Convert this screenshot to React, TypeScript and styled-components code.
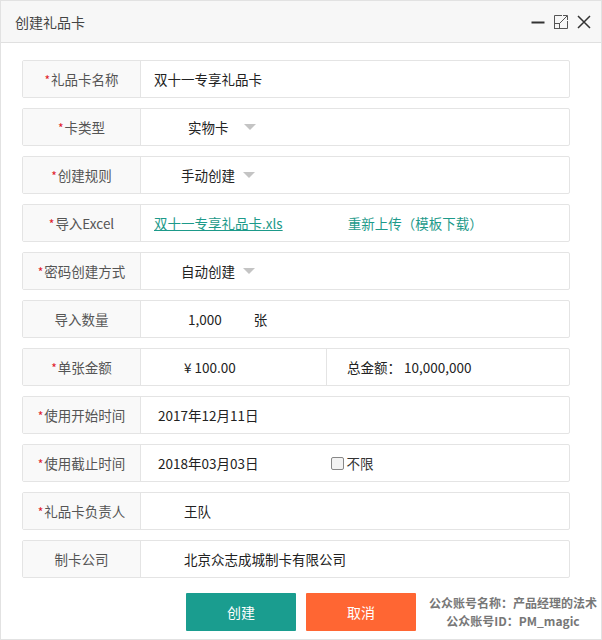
import React from "react"
import styled, { createGlobalStyle } from "styled-components"

const GlobalStyle = createGlobalStyle`
  html, body {
    margin: 0;
    padding: 0;
    background: #ffffff;
  }
  body {
    font-family: "Noto Sans CJK SC", "Noto Sans", "Liberation Sans", sans-serif;
    color: #333;
  }
`

const Dialog = styled.div`
  position: relative;
  width: 602px;
  height: 640px;
  box-sizing: border-box;
  border: 1px solid #e2e2e2;
  background: #fff;
  display: flex;
  flex-direction: column;
`

const Header = styled.div`
  height: 42px;
  box-sizing: border-box;
  display: flex;
  align-items: center;
  justify-content: space-between;
  padding: 0 9px 0 14px;
  background: #f7f7f7;
  border-bottom: 1px solid #e0e0e0;
`

const Title = styled.div`
  font-size: 14px;
  color: #444;
`

const Tools = styled.div`
  display: flex;
  align-items: center;
  gap: 7px;
`

const ToolIcon = styled.svg`
  width: 16px;
  height: 16px;
  display: block;
`

const Body = styled.div`
  display: flex;
  flex-direction: column;
  gap: 10px;
  padding: 17px 31px 0 21px;
`

const Row = styled.div`
  display: flex;
  height: 38px;
  box-sizing: border-box;
  border: 1px solid #e4e4e4;
  border-radius: 2px;
  font-size: 13.5px;
`

const Label = styled.div`
  width: 117px;
  flex-shrink: 0;
  display: flex;
  align-items: center;
  justify-content: center;
  background: #f9f9f9;
  border-right: 1px solid #e4e4e4;
  color: #555;
`

const Star = styled.span`
  color: #e0202a;
  font-size: 12px;
  margin-right: 1px;
`

const Value = styled.div<{ $indent: number; $width?: number; $divider?: boolean }>`
  display: flex;
  align-items: center;
  padding-left: ${(p) => p.$indent}px;
  color: #222;
  ${(p) => (p.$width ? `width: ${p.$width}px; flex-shrink: 0;` : "flex: 1;")}
  ${(p) => (p.$divider ? "border-right: 1px solid #e4e4e4;" : "")}
  box-sizing: border-box;
`

const Caret = styled.span<{ $gap: number }>`
  width: 0;
  height: 0;
  margin-left: ${(p) => p.$gap}px;
  border-left: 6px solid transparent;
  border-right: 6px solid transparent;
  border-top: 6px solid #c4c4c4;
`

const FileLink = styled.a<{ $underline?: boolean }>`
  color: #1d9a8a;
  text-decoration: ${(p) => (p.$underline ? "underline" : "none")};
  cursor: pointer;
`

const Unit = styled.span<{ $gap: number }>`
  margin-left: ${(p) => p.$gap}px;
`

const Check = styled.label`
  display: flex;
  align-items: center;
  margin-left: 73px;
  color: #333;
`

const Box = styled.span`
  width: 11px;
  height: 11px;
  border: 1px solid #888;
  border-radius: 2px;
  background: #f3f3f3;
  margin-right: 2px;
`

const Footer = styled.div`
  display: flex;
  justify-content: center;
  gap: 10px;
  padding-top: 15px;
  padding-left: 0px;
`

const Button = styled.button<{ $color: string }>`
  width: 110px;
  height: 38px;
  border: none;
  border-radius: 1px;
  background: ${(p) => p.$color};
  color: #fff;
  font-family: inherit;
  font-size: 14px;
  cursor: pointer;
`

const Watermark = styled.div`
  position: absolute;
  right: 4px;
  bottom: 9px;
  text-align: center;
  font-size: 12px;
  font-weight: bold;
  line-height: 18px;
  color: #777;
`

const Req: React.FC<{ children: React.ReactNode; required?: boolean }> = ({
  children,
  required = true,
}) => (
  <Label>
    {required && <Star>*</Star>}
    {children}
  </Label>
)

const App: React.FC = () => {
  return (
    <>
      <GlobalStyle />
      <Dialog>
        <Header>
          <Title>创建礼品卡</Title>
          <Tools>
            <ToolIcon viewBox="0 0 16 16">
              <path d="M1.5 8.5h13" stroke="#333" strokeWidth="2" />
            </ToolIcon>
            <ToolIcon viewBox="0 0 16 16">
              <path d="M9 1.5H1.5v13h13V7" fill="none" stroke="#555" strokeWidth="1" />
              <rect x="1.5" y="9.5" width="5" height="5" fill="none" stroke="#555" strokeWidth="1" />
              <path d="M7 9L14 2M10 1.5h4.5V6" fill="none" stroke="#555" strokeWidth="1" />
            </ToolIcon>
            <ToolIcon viewBox="0 0 16 16">
              <path d="M2 2l12 12M14 2L2 14" stroke="#333" strokeWidth="1.5" />
            </ToolIcon>
          </Tools>
        </Header>

        <Body>
          <Row>
            <Req>礼品卡名称</Req>
            <Value $indent={13}>双十一专享礼品卡</Value>
          </Row>
          <Row>
            <Req>卡类型</Req>
            <Value $indent={47}>
              实物卡
              <Caret $gap={15} />
            </Value>
          </Row>
          <Row>
            <Req>创建规则</Req>
            <Value $indent={40}>
              手动创建
              <Caret $gap={8} />
            </Value>
          </Row>
          <Row>
            <Req>导入Excel</Req>
            <Value $indent={13}>
              <FileLink $underline>双十一专享礼品卡.xls</FileLink>
              <Unit $gap={65}>
                <FileLink>重新上传（模板下载）</FileLink>
              </Unit>
            </Value>
          </Row>
          <Row>
            <Req>密码创建方式</Req>
            <Value $indent={40}>
              自动创建
              <Caret $gap={8} />
            </Value>
          </Row>
          <Row>
            <Req required={false}>导入数量</Req>
            <Value $indent={47}>
              1,000
              <Unit $gap={32}>张</Unit>
            </Value>
          </Row>
          <Row>
            <Req>单张金额</Req>
            <Value $indent={43} $width={186} $divider>
              ¥ 100.00
            </Value>
            <Value $indent={20}>总金额： 10,000,000</Value>
          </Row>
          <Row>
            <Req>使用开始时间</Req>
            <Value $indent={17}>2017年12月11日</Value>
          </Row>
          <Row>
            <Req>使用截止时间</Req>
            <Value $indent={17}>
              2018年03月03日
              <Check>
                <Box />
                不限
              </Check>
            </Value>
          </Row>
          <Row>
            <Req>礼品卡负责人</Req>
            <Value $indent={43}>王队</Value>
          </Row>
          <Row>
            <Req required={false}>制卡公司</Req>
            <Value $indent={43}>北京众志成城制卡有限公司</Value>
          </Row>
        </Body>

        <Footer>
          <Button $color="#1a9d8f">创建</Button>
          <Button $color="#ff6633">取消</Button>
        </Footer>

        <Watermark>
          公众账号名称：产品经理的法术
          <br />
          公众账号ID：PM_magic
        </Watermark>
      </Dialog>
    </>
  )
}

export default App
